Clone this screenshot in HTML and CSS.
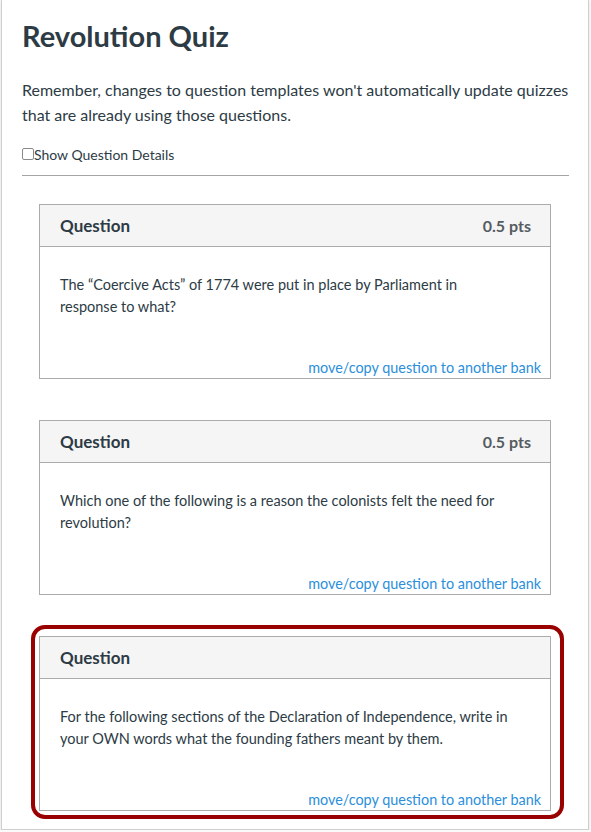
FILE: index.html
```html
<!DOCTYPE html>
<html lang="en">
<head>
<meta charset="utf-8">
<title>Revolution Quiz</title>
<link rel="stylesheet" href="styles.css">
</head>
<body>
<main class="panel">
  <h1 class="title">Revolution Quiz</h1>
  <p class="note">Remember, changes to question templates won't automatically update quizzes that are already using those questions.</p>
  <label class="details"><input type="checkbox" class="check">Show Question Details</label>
  <hr class="rule">
  <section class="questions">
    <article class="question">
      <header class="q-head"><span class="q-name">Question</span><span class="q-pts">0.5 pts</span></header>
      <div class="q-body">
        <p class="q-text">The “Coercive Acts” of 1774 were put in place by Parliament in response to what?</p>
        <a class="q-link" href="#">move/copy question to another bank</a>
      </div>
    </article>
    <article class="question">
      <header class="q-head"><span class="q-name">Question</span><span class="q-pts">0.5 pts</span></header>
      <div class="q-body">
        <p class="q-text">Which one of the following is a reason the colonists felt the need for revolution?</p>
        <a class="q-link" href="#">move/copy question to another bank</a>
      </div>
    </article>
    <article class="question highlighted">
      <header class="q-head"><span class="q-name">Question</span></header>
      <div class="q-body">
        <p class="q-text">For the following sections of the Declaration of Independence, write in your OWN words what the founding fathers meant by them.</p>
        <a class="q-link" href="#">move/copy question to another bank</a>
      </div>
    </article>
  </section>
</main>
</body>
</html>
```
FILE: styles.css
```css
html, body {
  margin: 0;
  padding: 0;
  background: #fafafa;
}
body {
  font-family: Lato, "Liberation Sans", sans-serif;
  color: #2d3b45;
}
.panel {
  box-sizing: border-box;
  width: 588px;
  height: 830px;
  margin-left: 1px;
  padding: 0 19px 0 20px;
  background: #fff;
  border: 1px solid #cfcfcf;
  border-top: none;
  box-shadow: 0 1px 2px rgba(0,0,0,0.12);
}
.title {
  margin: 0;
  padding-top: 18px;
  font-size: 29px;
  line-height: 36px;
  font-weight: 700;
  color: #2d3b45;
}
.note {
  margin: 23px 0 0;
  font-size: 16px;
  line-height: 25px;
}
.details {
  display: flex;
  align-items: center;
  margin-top: 18px;
  font-size: 14px;
  line-height: 20px;
}
.check {
  appearance: none;
  -webkit-appearance: none;
  box-sizing: border-box;
  width: 12px;
  height: 12px;
  margin: 0 0 2px 0;
  border: 1px solid #8a8a8a;
  border-radius: 2px;
  background: #fff;
}
.rule {
  margin: 10px 0 0;
  border: none;
  border-top: 1px solid #a5a5a5;
  height: 0;
}
.questions {
  display: flex;
  flex-direction: column;
  gap: 41px;
  margin: 28px 18px 0 17px;
}
.question {
  position: relative;
  border: 1px solid #ababab;
  background: #fff;
}
.highlighted::after {
  content: "";
  position: absolute;
  top: -12px;
  left: -9px;
  right: -14px;
  bottom: -9px;
  border: 4px solid #990000;
  border-radius: 14px;
  pointer-events: none;
}
.q-head {
  display: flex;
  justify-content: space-between;
  align-items: center;
  height: 41px;
  padding: 0 19px 0 20px;
  background: #f5f5f5;
  border-bottom: 1px solid #ababab;
}
.q-name {
  font-size: 17px;
  font-weight: 700;
}
.q-pts {
  font-size: 16px;
  font-weight: 700;
  color: #555c61;
}
.q-body {
  display: flex;
  flex-direction: column;
  height: 131px;
  box-sizing: border-box;
  padding: 27px 9px 0 20px;
}
.q-text {
  margin: 0;
  font-size: 14.5px;
  line-height: 22px;
  padding-right: 30px;
}
.q-link {
  margin-top: auto;
  align-self: flex-end;
  font-size: 14.4px;
  line-height: 20px;
  color: #2b8fdb;
  text-decoration: none;
}
```
